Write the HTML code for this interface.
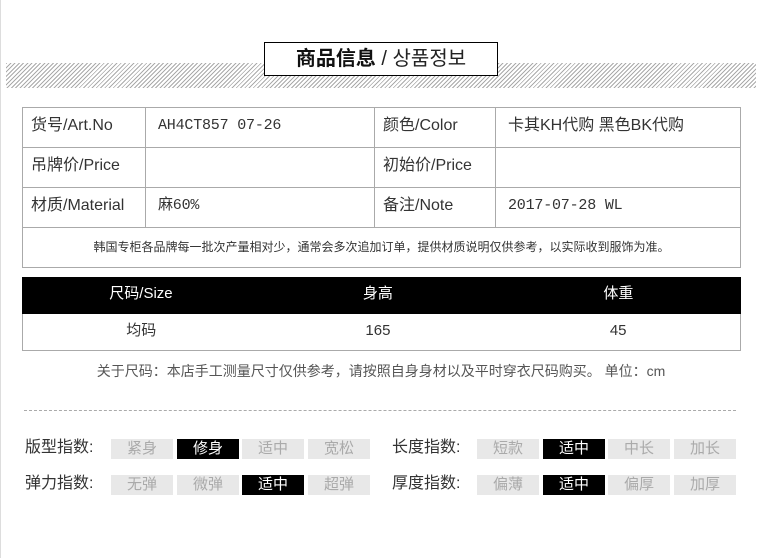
<!DOCTYPE html><html><head><meta charset="utf-8"><style>
body{margin:0;width:762px;height:558px;background:#fff;position:relative;font-family:"Liberation Sans","Noto Sans CJK SC",sans-serif;overflow:hidden}
.a{position:absolute}
.hatch{left:6px;top:63px;width:750px;height:25px;background:repeating-linear-gradient(135deg,#aaa 0 1px,#fff 1px 3px)}
.title{left:264px;top:42px;width:232px;height:32px;border:1px solid #000;background:#fff;text-align:center;line-height:32px;font-size:20px;color:#222}
table{border-collapse:collapse;position:absolute}
td{border:1px solid #aaa;font-size:16px;color:#333;padding:0 0 3px 8px;line-height:20px}
.t2 td{text-align:center;padding:0 0 3px;font-size:15px}
.m{font-family:'Liberation Mono',monospace;font-size:15px;letter-spacing:-0.2px;padding-left:12px}
.lab{font-size:16px;color:#333;line-height:20px}
.b{position:absolute;width:62px;height:20px;background:#e8e8e8;color:#aaa;font-size:15px;text-align:center;line-height:20px}
.b.on{background:#000;color:#fff}
</style></head><body>
<div class="a" style="left:0;top:0;width:1px;height:558px;background:#ddd"></div>
<div class="a hatch"></div>
<div class="a title"><b style="color:#111">商品信息</b> / 상품정보</div>
<table style="left:22px;top:107px;width:719px">
<tr style="height:40px"><td style="width:114px">货号/Art.No</td><td class="m" style="width:216px">AH4CT857 07-26</td><td style="width:112px">颜色/Color</td><td style="padding-left:12px">卡其KH代购 黑色BK代购</td></tr>
<tr style="height:40px"><td>吊牌价/Price</td><td></td><td>初始价/Price</td><td></td></tr>
<tr style="height:40px"><td>材质/Material</td><td class="m">麻60%</td><td>备注/Note</td><td class="m">2017-07-28 WL</td></tr>
<tr style="height:40px"><td colspan="4" style="text-align:center;font-size:12px;padding:0 0 2px">韩国专柜各品牌每一批次产量相对少，通常会多次追加订单，提供材质说明仅供参考，以实际收到服饰为准。</td></tr>
</table>
<table class="t2" style="left:22px;top:277px;width:719px">
<tr style="height:36px;background:#000"><td style="color:#fff;border-color:#000;width:33%">尺码/Size</td><td style="color:#fff;border-color:#000;width:33%">身高</td><td style="color:#fff;border-color:#000">体重</td></tr>
<tr style="height:37px"><td style="border-right:none">均码</td><td style="border-left:none;border-right:none">165</td><td style="border-left:none">45</td></tr>
</table>
<div class="a" style="left:0;width:762px;top:361px;text-align:center;font-size:14px;color:#555">关于尺码：本店手工测量尺寸仅供参考，请按照自身身材以及平时穿衣尺码购买。 单位：cm</div>
<div class="a" style="left:24px;top:410px;width:712px;border-top:1px dashed #aaa"></div>
<div class="a lab" style="left:25px;top:438px">版型指数:</div>
<div class="b" style="left:111px;top:439px">紧身</div><div class="b on" style="left:177px;top:439px">修身</div><div class="b" style="left:242px;top:439px">适中</div><div class="b" style="left:308px;top:439px">宽松</div>
<div class="a lab" style="left:392px;top:438px">长度指数:</div>
<div class="b" style="left:477px;top:439px">短款</div><div class="b on" style="left:543px;top:439px">适中</div><div class="b" style="left:608px;top:439px">中长</div><div class="b" style="left:674px;top:439px">加长</div>
<div class="a lab" style="left:25px;top:474px">弹力指数:</div>
<div class="b" style="left:111px;top:475px">无弹</div><div class="b" style="left:177px;top:475px">微弹</div><div class="b on" style="left:242px;top:475px">适中</div><div class="b" style="left:308px;top:475px">超弹</div>
<div class="a lab" style="left:392px;top:474px">厚度指数:</div>
<div class="b" style="left:477px;top:475px">偏薄</div><div class="b on" style="left:543px;top:475px">适中</div><div class="b" style="left:608px;top:475px">偏厚</div><div class="b" style="left:674px;top:475px">加厚</div>
</body></html>
